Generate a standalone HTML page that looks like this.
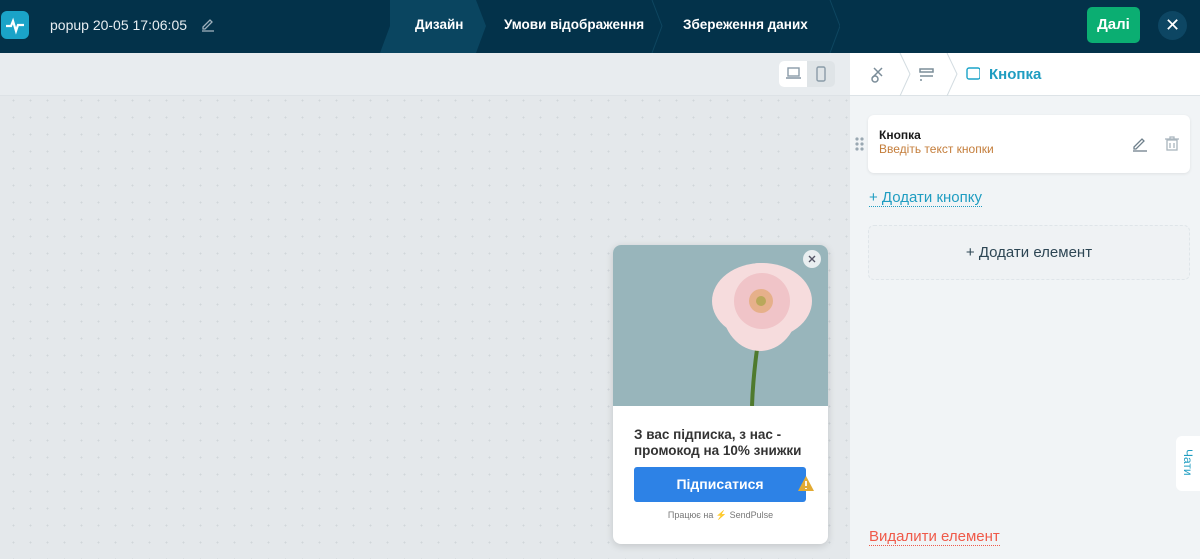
<!DOCTYPE html>
<html><head><meta charset="utf-8"><style>
*{box-sizing:border-box;margin:0;padding:0}
body{width:1200px;height:559px;overflow:hidden;font-family:"Liberation Sans",sans-serif;background:#e6eaed;position:relative}
.hdr{position:absolute;left:0;top:0;width:1200px;height:53px;background:#03324a}
.logo{position:absolute;left:1px;top:11px;width:28px;height:28px;border-radius:6px;background:#1aa3c8}
.t{position:absolute;color:#fff;font-size:13.5px}
.canvas{position:absolute;left:0;top:53px;width:850px;height:506px;background-color:#e4e8eb;background-image:radial-gradient(circle,#d0d6da 0.8px,transparent 1px);background-size:17px 17px;background-position:5px 5px}
.tb{position:absolute;left:0;top:53px;width:850px;height:43px;background:#e8ecef;border-bottom:1px solid #dde2e6}
.rp{position:absolute;left:850px;top:53px;width:350px;height:506px;background:#f1f4f6}
.rph{position:absolute;left:850px;top:53px;width:350px;height:43px;background:#fff;border-bottom:1px solid #dde3e7}
</style></head><body>
<div class="hdr">
<div class="logo"><svg width="28" height="28"><path d="M5 15h5l2-5 3 10 2-6h6" stroke="#fff" stroke-width="2.2" fill="none"/></svg></div>
<div class="t" style="left:50px;top:17px;color:#e8eef2;font-size:14px">popup 20-05 17:06:05</div>
<svg style="position:absolute;left:200px;top:16px" width="16" height="16"><path d="M3 11l7-7 2 2-7 7H3z" stroke="#9fb1bd" fill="none" stroke-width="1.3"/><path d="M2 15h12" stroke="#9fb1bd" stroke-width="1.3"/></svg>
<svg style="position:absolute;left:380px;top:0" width="460" height="53"><polygon points="10,0 96,0 106,26 96,53 0,53 10,26" fill="#0a4560"/><path d="M272 0l10 26-10 27M450 0l10 26-10 27" stroke="#0e4660" fill="none"/></svg>
<div class="t" style="left:415px;top:17px;font-weight:bold">Дизайн</div>
<div class="t" style="left:504px;top:17px;font-weight:bold">Умови відображення</div>
<div class="t" style="left:683px;top:17px;font-weight:bold">Збереження даних</div>
<div style="position:absolute;left:1087px;top:7px;width:53px;height:36px;border-radius:5px;background:#0bae72;color:#fff;font-size:15px;font-weight:bold;text-align:center;line-height:36px">Далі</div>
<div style="position:absolute;left:1158px;top:11px;width:29px;height:29px;border-radius:50%;background:#0d4663;color:#fff;font-size:18px;text-align:center;line-height:29px">✕</div>
</div>
<div class="canvas"></div>
<div class="tb"></div>
<div style="position:absolute;left:779px;top:61px;width:56px;height:26px;border-radius:5px;background:#dfe4e7"></div>
<div style="position:absolute;left:779px;top:61px;width:28px;height:26px;border-radius:5px 0 0 5px;background:#fff"></div>
<svg style="position:absolute;left:786px;top:66px" width="44" height="16"><rect x="2" y="2" width="11" height="8" fill="none" stroke="#8a9ba8" stroke-width="1.4"/><path d="M0 12h15" stroke="#8a9ba8" stroke-width="1.6"/><rect x="31" y="1" width="8" height="14" rx="1.5" fill="none" stroke="#8a9ba8" stroke-width="1.4"/></svg>

<div class="rp"></div>
<div class="rph"></div>
<svg style="position:absolute;left:860px;top:53px" width="120" height="43"><path d="M40 0l10 21-10 22M87 0l10 21-10 22" stroke="#d3dce1" fill="none"/><g stroke="#7b8d99" stroke-width="1.5" fill="none"><path d="M12 25l10-10M14 15l8 8"/><circle cx="15" cy="26" r="3"/></g><g stroke="#7b8d99" stroke-width="1.5" fill="none"><rect x="60" y="16" width="13" height="3"/><path d="M60 23h13M60 27h2"/></g><rect x="107" y="15" width="13" height="11" rx="2" fill="none" stroke="#1aa3c8" stroke-width="1.4"/></svg>
<div style="position:absolute;left:989px;top:66px;color:#1f9dc1;font-size:15px;font-weight:bold">Кнопка</div>

<div style="position:absolute;left:868px;top:115px;width:322px;height:58px;background:#fff;border-radius:6px;box-shadow:0 1px 3px rgba(0,0,0,.08)"></div>
<svg style="position:absolute;left:855px;top:137px" width="10" height="14"><g fill="#9aa8b2"><circle cx="2" cy="2" r="1.6"/><circle cx="7" cy="2" r="1.6"/><circle cx="2" cy="7" r="1.6"/><circle cx="7" cy="7" r="1.6"/><circle cx="2" cy="12" r="1.6"/><circle cx="7" cy="12" r="1.6"/></g></svg>
<div style="position:absolute;left:879px;top:128px;font-size:12px;font-weight:bold;color:#1a1a1a">Кнопка</div>
<div style="position:absolute;left:879px;top:142px;font-size:12px;color:#c47d3a">Введіть текст кнопки</div>
<svg style="position:absolute;left:1131px;top:135px" width="60" height="18"><path d="M3 12l8-8 2 2-8 8H3z" stroke="#6f808c" fill="none" stroke-width="1.3"/><path d="M2 16h14" stroke="#6f808c" stroke-width="1.3"/><g stroke="#a9b5bd" fill="none" stroke-width="1.3"><path d="M34 4h14M39 4V2h4v2"/><rect x="36" y="5" width="10" height="10"/><path d="M39 8v5M43 8v5"/></g></svg>
<div style="position:absolute;left:869px;top:189px;font-size:15px;color:#1f9dc1;border-bottom:1px dotted #1f9dc1;line-height:17px">+ Додати кнопку</div>
<div style="position:absolute;left:868px;top:225px;width:322px;height:55px;border:1px dashed #dfe5e9;border-radius:6px;background:#eff2f4;text-align:center;line-height:53px;font-size:15px;color:#2d4654">+ Додати елемент</div>
<div style="position:absolute;left:869px;top:528px;font-size:15px;color:#ef5a4a;border-bottom:1px dotted #ef5a4a;line-height:17px">Видалити елемент</div>
<div style="position:absolute;left:1176px;top:436px;width:30px;height:55px;background:#fff;border-radius:6px 0 0 6px"></div>
<div style="position:absolute;left:1181px;top:449px;font-size:12px;color:#1f9dc1;writing-mode:vertical-rl">Чати</div>

<div style="position:absolute;left:613px;top:245px;width:215px;height:299px;background:#fff;border-radius:8px;overflow:hidden;box-shadow:0 2px 8px rgba(0,0,0,.15)">
<svg width="215" height="161" style="display:block"><rect width="215" height="161" fill="#98b5bb"/><path d="M146 90 Q140 130 139 161" stroke="#4f7a2e" stroke-width="4" fill="none"/>
<g fill="#f6dcdd"><ellipse cx="149" cy="56" rx="50" ry="38"/><ellipse cx="147" cy="62" rx="38" ry="44"/></g>
<circle cx="149" cy="56" r="28" fill="#f0c4c8"/><circle cx="148" cy="56" r="12" fill="#e6b08a"/><circle cx="148" cy="56" r="5" fill="#b9a85a"/><circle cx="199" cy="14" r="9" fill="#e9eef0"/><path d="M196 11l6 6M202 11l-6 6" stroke="#556" stroke-width="1.4"/></svg>
<div style="position:absolute;left:21px;top:182px;font-size:13.5px;font-weight:bold;color:#333;line-height:16px">З вас підписка, з нас -<br>промокод на 10% знижки</div>
<div style="position:absolute;left:21px;top:222px;width:172px;height:35px;background:#2d82e6;border-radius:3px;color:#fff;font-weight:bold;font-size:14px;text-align:center;line-height:35px">Підписатися</div>
<svg style="position:absolute;left:184px;top:230px" width="18" height="17"><path d="M9 1l8 15H1z" fill="#e2aa33"/><path d="M9 6v5M9 13v1" stroke="#fff" stroke-width="1.8"/></svg>
<div style="position:absolute;left:0;top:265px;width:215px;text-align:center;font-size:9px;color:#777">Працює на <span style="color:#f0b020">⚡</span> SendPulse</div>
</div>
</body></html>
